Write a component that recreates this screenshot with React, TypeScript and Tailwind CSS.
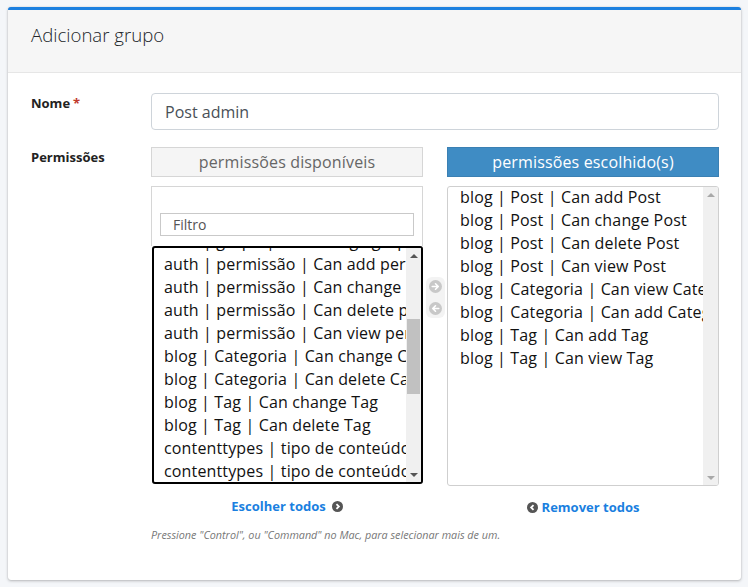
import React from "react";

const font = { fontFamily: '"Open Sans", "Liberation Sans", sans-serif' };

function ArrowCircle({ dir, color }: { dir: "right" | "left"; color: string }) {
  return (
    <svg width="13" height="13" viewBox="0 0 16 16">
      <circle cx="8" cy="8" r="8" fill={color} />
      {dir === "right" ? (
        <path d="M4 8h7M8 4.6L11.4 8 8 11.4" stroke="#fff" strokeWidth="2" fill="none" strokeLinecap="round" strokeLinejoin="round" />
      ) : (
        <path d="M12 8H5M8 4.6L4.6 8 8 11.4" stroke="#fff" strokeWidth="2" fill="none" strokeLinecap="round" strokeLinejoin="round" />
      )}
    </svg>
  );
}

function ChevronCircle({ dir }: { dir: "right" | "left" }) {
  return (
    <svg width="11" height="11" viewBox="0 0 16 16">
      <circle cx="8" cy="8" r="8" fill="#555" />
      {dir === "right" ? (
        <path d="M6.5 4.5L10 8l-3.5 3.5" stroke="#fff" strokeWidth="2.6" fill="none" />
      ) : (
        <path d="M9.5 4.5L6 8l3.5 3.5" stroke="#fff" strokeWidth="2.6" fill="none" />
      )}
    </svg>
  );
}

function Scrollbar({ thumb, arrow }: { thumb?: { top: number; height: number }; arrow: string }) {
  return (
    <div className="w-[15px] shrink-0 bg-[#f0f0f0] flex flex-col">
      <div className="h-[15px] flex items-center justify-center">
        <div className="w-0 h-0 border-l-[4px] border-r-[4px] border-b-[4px] border-l-transparent border-r-transparent" style={{ borderBottomColor: arrow }} />
      </div>
      <div className="flex-1 relative">
        {thumb && (
          <div className="absolute left-[1px] right-[1px] bg-[#c1c1c1]" style={{ top: thumb.top, height: thumb.height }} />
        )}
      </div>
      <div className="h-[15px] flex items-center justify-center">
        <div className="w-0 h-0 border-l-[4px] border-r-[4px] border-t-[4px] border-l-transparent border-r-transparent" style={{ borderTopColor: arrow }} />
      </div>
    </div>
  );
}

const leftItems = [
  "auth | permissão | Can add permissão",
  "auth | permissão | Can change permissão",
  "auth | permissão | Can delete permissão",
  "auth | permissão | Can view permissão",
  "blog | Categoria | Can change Categoria",
  "blog | Categoria | Can delete Categoria",
  "blog | Tag | Can change Tag",
  "blog | Tag | Can delete Tag",
  "contenttypes | tipo de conteúdo | Can add tipo de conteúdo",
  "contenttypes | tipo de conteúdo | Can change tipo de conteúdo",
];

const rightItems = [
  "blog | Post | Can add Post",
  "blog | Post | Can change Post",
  "blog | Post | Can delete Post",
  "blog | Post | Can view Post",
  "blog | Categoria | Can view Categoria",
  "blog | Categoria | Can add Categoria",
  "blog | Tag | Can add Tag",
  "blog | Tag | Can view Tag",
];

export default function App() {
  return (
    <div className="w-[748px] h-[587px] bg-[#f4f6f9] pt-[7px] pl-[8px] overflow-hidden" style={font}>
      <div className="w-[733px] h-[573px] bg-white border-t-[3px] border-[#1a7fe0] rounded-[3px] shadow-[0_0_1px_rgba(0,0,0,0.2),0_1px_3px_rgba(0,0,0,0.25)] flex flex-col">
        <div className="h-[63px] bg-[#f6f6f6] border-b border-[#e6e6e6] pl-[23px] pt-[12px]">
          <h3 className="text-[18.6px] leading-[26px] text-[#212529] font-light">Adicionar grupo</h3>
        </div>
        <div className="pl-[23px] pt-[20px] flex flex-col">
          <div className="flex items-start">
            <div className="w-[120px] pt-[1px] text-[13px] font-bold text-[#222] leading-[18px]">
              Nome<span className="text-[#c0392b] ml-[3px]">*</span>
            </div>
            <div className="w-[568px] h-[37px] border border-[#ced4da] rounded-[4px] flex items-center pl-[13px] text-[16px] text-[#495057]">
              Post admin
            </div>
          </div>
          <div className="flex items-start mt-[17px]">
            <div className="w-[120px] pt-[1px] text-[13px] font-bold text-[#222] leading-[18px]">Permissões</div>
            <div className="flex flex-col">
              <div className="flex">
                {/* left column */}
                <div className="w-[272px] flex flex-col">
                  <div className="h-[30px] border border-[#d6d6d6] bg-[#f5f5f5] flex items-center justify-center text-[16px] tracking-[0.15px] text-[#666]">
                    permissões disponíveis
                  </div>
                  <div className="mt-[9px] border border-b-0 border-[#d6d6d6] pt-[26px] pb-[10px] px-[8px]">
                    <div className="h-[23px] border border-[#c9c9c9] flex items-center pl-[12px] text-[14px] text-[#555]">Filtro</div>
                  </div>
                  <div className="ml-[1px] h-[238px] border-2 border-black rounded-[3px] flex overflow-hidden">
                    <div className="flex-1 min-w-0 overflow-hidden pl-[10px] text-[16px] tracking-[0.15px] text-[#111] leading-[23px] whitespace-nowrap">
                      <div className="-mt-[18px]">auth | grupo | Can change grupo</div>
                      {leftItems.map((t) => (
                        <div key={t}>{t}</div>
                      ))}
                    </div>
                    <Scrollbar thumb={{ top: 56, height: 75 }} arrow="#555" />
                  </div>
                </div>
                {/* arrows */}
                <div className="w-[24px] flex justify-center pt-[130px]">
                  <div className="w-[19px] h-[41px] bg-[#f3f3f3] rounded-[6px] flex flex-col items-center justify-center gap-[9px]">
                    <ArrowCircle dir="right" color="#c8c8c8" />
                    <ArrowCircle dir="left" color="#c8c8c8" />
                  </div>
                </div>
                {/* right column */}
                <div className="w-[272px] flex flex-col">
                  <div className="h-[30px] border border-[#3b80b3] bg-[#3f8cc4] flex items-center justify-center text-[16px] tracking-[0.15px] text-white">
                    permissões escolhido(s)
                  </div>
                  <div className="mt-[9px] h-[300px] border border-[#cfcfcf] rounded-[3px] flex overflow-hidden">
                    <div className="flex-1 min-w-0 overflow-hidden pl-[12px] text-[16px] tracking-[0.15px] text-[#111] leading-[23px] whitespace-nowrap">
                      <div className="-mt-[1px]">
                        {rightItems.map((t) => (
                          <div key={t}>{t}</div>
                        ))}
                      </div>
                    </div>
                    <Scrollbar arrow="#a8a8a8" />
                  </div>
                </div>
              </div>
              <div className="flex mt-[11px] text-[13px] font-bold text-[#1a7fe0] leading-[16px]">
                <div className="w-[272px] flex items-center justify-center gap-[6px]">
                  Escolher todos <ChevronCircle dir="right" />
                </div>
                <div className="w-[24px]" />
                <div className="w-[272px] flex items-center justify-center gap-[4px] pt-[2px]">
                  <ChevronCircle dir="left" /> Remover todos
                </div>
              </div>
              <div className="mt-[13px] text-[10.8px] italic text-[#777] leading-[14px]">
                Pressione "Control", ou "Command" no Mac, para selecionar mais de um.
              </div>
            </div>
          </div>
        </div>
      </div>
    </div>
  );
}
